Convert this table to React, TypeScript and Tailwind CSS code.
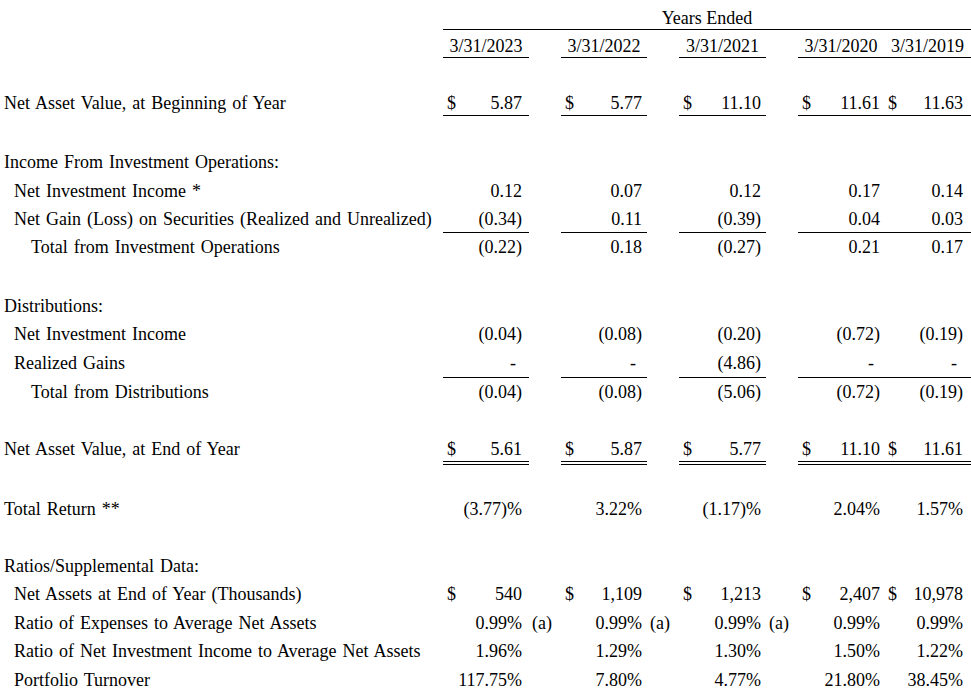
import React from 'react';

type Cell = { v: string; d?: boolean; note?: string };
type Line = 'none' | 'single' | 'double';

interface Row {
  label: string;
  indent?: number;
  cells?: Cell[];
  line?: Line;
  box: string;
}

const widths = ['w-[86px]', 'w-[86px]', 'w-[87px]', 'w-[86px]', 'w-[87px]'];
const padR = ['pr-[7px]', 'pr-[5px]', 'pr-[5px]', 'pr-[4px]', 'pr-[8px]'];
const indents = ['pl-[4px]', 'pl-[14px]', 'pl-[31px]'];
const dates = ['3/31/2023', '3/31/2022', '3/31/2021', '3/31/2020', '3/31/2019'];

const n = (...vals: string[]): Cell[] => vals.map((v) => ({ v }));
const usd = (...vals: string[]): Cell[] => vals.map((v) => ({ v, d: true }));

const rows: Row[] = [
  { label: 'Net Asset Value, at Beginning of Year', cells: usd('5.87', '5.77', '11.10', '11.61', '11.63'), line: 'single', box: 'mt-[31px] h-[27px]' },
  { label: 'Income From Investment Operations:', box: 'mt-[32px] h-[28.5px]' },
  { label: 'Net Investment Income *', indent: 1, cells: n('0.12', '0.07', '0.12', '0.17', '0.14'), box: 'h-[28.5px]' },
  { label: 'Net Gain (Loss) on Securities (Realized and Unrealized)', indent: 1, cells: n('(0.34)', '0.11', '(0.39)', '0.04', '0.03'), line: 'single', box: 'h-[28px]' },
  { label: 'Total from Investment Operations', indent: 2, cells: n('(0.22)', '0.18', '(0.27)', '0.21', '0.17'), box: 'h-[28.5px]' },
  { label: 'Distributions:', box: 'mt-[30px] h-[28px]' },
  { label: 'Net Investment Income', indent: 1, cells: n('(0.04)', '(0.08)', '(0.20)', '(0.72)', '(0.19)'), box: 'h-[29px]' },
  { label: 'Realized Gains', indent: 1, cells: n('-', '-', '(4.86)', '-', '-'), line: 'single', box: 'h-[29px]' },
  { label: 'Total from Distributions', indent: 2, cells: n('(0.04)', '(0.08)', '(5.06)', '(0.72)', '(0.19)'), box: 'h-[28px]' },
  { label: 'Net Asset Value, at End of Year', cells: usd('5.61', '5.87', '5.77', '11.10', '11.61'), line: 'double', box: 'mt-[29.5px] h-[30px]' },
  { label: 'Total Return **', cells: n('(3.77)%', '3.22%', '(1.17)%', '2.04%', '1.57%'), box: 'mt-[30px] h-[28px]' },
  { label: 'Ratios/Supplemental Data:', box: 'mt-[28.5px] h-[28.5px]' },
  { label: 'Net Assets at End of Year (Thousands)', indent: 1, cells: usd('540', '1,109', '1,213', '2,407', '10,978'), box: 'h-[28.5px]' },
  {
    label: 'Ratio of Expenses to Average Net Assets',
    indent: 1,
    cells: [
      { v: '0.99%', note: '(a)' },
      { v: '0.99%', note: '(a)' },
      { v: '0.99%', note: '(a)' },
      { v: '0.99%' },
      { v: '0.99%' },
    ],
    box: 'h-[28.5px]',
  },
  { label: 'Ratio of Net Investment Income to Average Net Assets', indent: 1, cells: n('1.96%', '1.29%', '1.30%', '1.50%', '1.22%'), box: 'h-[28.5px]' },
  { label: 'Portfolio Turnover', indent: 1, cells: n('117.75%', '7.80%', '4.77%', '21.80%', '38.45%'), box: 'h-[28.5px]' },
];

const CellBody: React.FC<{ cell: Cell; i: number; className?: string }> = ({ cell, i, className = '' }) => (
  <div className={`flex items-start ${padR[i]} ${className}`}>
    {cell.d && <span className="pl-[4px]">$</span>}
    <span className={`ml-auto ${cell.v === '-' ? 'mr-[6px]' : ''}`}>{cell.v}</span>
  </div>
);

const ValueCell: React.FC<{ cell: Cell; i: number; line: Line }> = ({ cell, i, line }) => {
  if (line === 'double') {
    return (
      <div className={`${widths[i]} shrink-0 flex flex-col`}>
        <CellBody cell={cell} i={i} className="h-[27px] border-b border-black" />
        <div className="mt-[2px] h-px bg-black" />
      </div>
    );
  }
  return (
    <div className={`${widths[i]} shrink-0 h-full`}>
      <CellBody cell={cell} i={i} className={`h-full ${line === 'single' ? 'border-b border-black' : ''}`} />
    </div>
  );
};

const TableRow: React.FC<{ row: Row }> = ({ row }) => {
  const line = row.line ?? 'none';
  return (
    <div className={`flex ${row.box}`}>
      <div className={`w-[443px] shrink-0 whitespace-nowrap [word-spacing:1.5px] ${indents[row.indent ?? 0]}`}>{row.label}</div>
      {row.cells?.map((cell, i) => (
        <React.Fragment key={i}>
          <ValueCell cell={cell} i={i} line={line} />
          {i < 3 && <div className="w-[32px] shrink-0 pl-[3px] whitespace-nowrap">{cell.note}</div>}
        </React.Fragment>
      ))}
    </div>
  );
};

export default function App() {
  return (
    <div className="w-[971px] h-[694px] overflow-hidden bg-white text-black text-[18px] leading-[28px] font-['Liberation_Serif','Times_New_Roman',serif]">
      <div className="pt-[4px] flex">
        <div className="w-[443px] shrink-0" />
        <div className="w-[528px] h-[26px] border-b border-black text-center">Years Ended</div>
      </div>
      <div className="mt-[2px] flex h-[26px]">
        <div className="w-[443px] shrink-0" />
        {dates.map((d, i) => (
          <React.Fragment key={d}>
            <div className={`${widths[i]} shrink-0 h-full border-b border-black text-center`}>{d}</div>
            {i < 3 && <div className="w-[32px] shrink-0" />}
          </React.Fragment>
        ))}
      </div>
      {rows.map((row) => (
        <TableRow key={row.label} row={row} />
      ))}
    </div>
  );
}
